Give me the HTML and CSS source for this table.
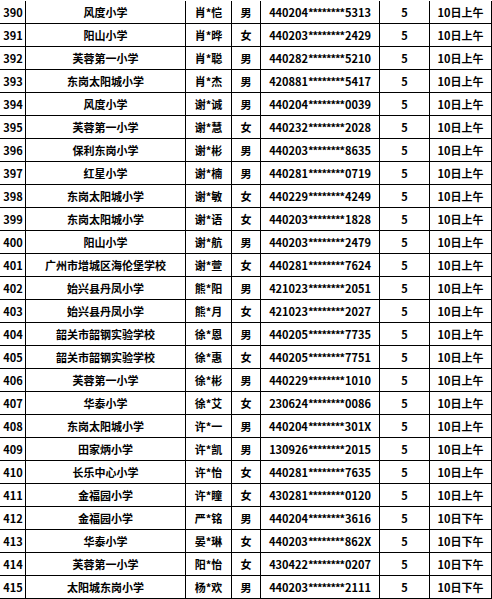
FILE: index.html
```html
<!DOCTYPE html>
<html lang="zh-CN">
<head>
<meta charset="utf-8">
<title>名单</title>
<link rel="stylesheet" href="styles.css">
</head>
<body>
<div class="sheet">
<div class="row"><div>390</div><div>风度小学</div><div>肖*恺</div><div>男</div><div>440204<span class="mask">********</span>5313</div><div>5</div><div>10日上午</div></div>
<div class="row"><div>391</div><div>阳山小学</div><div>肖*晔</div><div>女</div><div>440203<span class="mask">********</span>2429</div><div>5</div><div>10日上午</div></div>
<div class="row"><div>392</div><div>芙蓉第一小学</div><div>肖*聪</div><div>男</div><div>440282<span class="mask">********</span>5210</div><div>5</div><div>10日上午</div></div>
<div class="row"><div>393</div><div>东岗太阳城小学</div><div>肖*杰</div><div>男</div><div>420881<span class="mask">********</span>5417</div><div>5</div><div>10日上午</div></div>
<div class="row"><div>394</div><div>风度小学</div><div>谢*诚</div><div>男</div><div>440204<span class="mask">********</span>0039</div><div>5</div><div>10日上午</div></div>
<div class="row"><div>395</div><div>芙蓉第一小学</div><div>谢*慧</div><div>女</div><div>440232<span class="mask">********</span>2028</div><div>5</div><div>10日上午</div></div>
<div class="row"><div>396</div><div>保利东岗小学</div><div>谢*彬</div><div>男</div><div>440203<span class="mask">********</span>8635</div><div>5</div><div>10日上午</div></div>
<div class="row"><div>397</div><div>红星小学</div><div>谢*楠</div><div>男</div><div>440281<span class="mask">********</span>0719</div><div>5</div><div>10日上午</div></div>
<div class="row"><div>398</div><div>东岗太阳城小学</div><div>谢*敏</div><div>女</div><div>440229<span class="mask">********</span>4249</div><div>5</div><div>10日上午</div></div>
<div class="row"><div>399</div><div>东岗太阳城小学</div><div>谢*语</div><div>女</div><div>440203<span class="mask">********</span>1828</div><div>5</div><div>10日上午</div></div>
<div class="row"><div>400</div><div>阳山小学</div><div>谢*航</div><div>男</div><div>440203<span class="mask">********</span>2479</div><div>5</div><div>10日上午</div></div>
<div class="row"><div>401</div><div>广州市增城区海伦堡学校</div><div>谢*萱</div><div>女</div><div>440281<span class="mask">********</span>7624</div><div>5</div><div>10日上午</div></div>
<div class="row"><div>402</div><div>始兴县丹凤小学</div><div>熊*阳</div><div>男</div><div>421023<span class="mask">********</span>2051</div><div>5</div><div>10日上午</div></div>
<div class="row"><div>403</div><div>始兴县丹凤小学</div><div>熊*月</div><div>女</div><div>421023<span class="mask">********</span>2027</div><div>5</div><div>10日上午</div></div>
<div class="row"><div>404</div><div>韶关市韶钢实验学校</div><div>徐*恩</div><div>男</div><div>440205<span class="mask">********</span>7735</div><div>5</div><div>10日上午</div></div>
<div class="row"><div>405</div><div>韶关市韶钢实验学校</div><div>徐*惠</div><div>女</div><div>440205<span class="mask">********</span>7751</div><div>5</div><div>10日上午</div></div>
<div class="row"><div>406</div><div>芙蓉第一小学</div><div>徐*彬</div><div>男</div><div>440229<span class="mask">********</span>1010</div><div>5</div><div>10日上午</div></div>
<div class="row"><div>407</div><div>华泰小学</div><div>徐*艾</div><div>女</div><div>230624<span class="mask">********</span>0086</div><div>5</div><div>10日上午</div></div>
<div class="row"><div>408</div><div>东岗太阳城小学</div><div>许*一</div><div>男</div><div>440204<span class="mask">********</span>301X</div><div>5</div><div>10日上午</div></div>
<div class="row"><div>409</div><div>田家炳小学</div><div>许*凯</div><div>男</div><div>130926<span class="mask">********</span>2015</div><div>5</div><div>10日上午</div></div>
<div class="row"><div>410</div><div>长乐中心小学</div><div>许*怡</div><div>女</div><div>440281<span class="mask">********</span>7635</div><div>5</div><div>10日上午</div></div>
<div class="row"><div>411</div><div>金福园小学</div><div>许*瞳</div><div>女</div><div>430281<span class="mask">********</span>0120</div><div>5</div><div>10日上午</div></div>
<div class="row"><div>412</div><div>金福园小学</div><div>严*铭</div><div>男</div><div>440204<span class="mask">********</span>3616</div><div>5</div><div>10日下午</div></div>
<div class="row"><div>413</div><div>华泰小学</div><div>晏*琳</div><div>女</div><div>440203<span class="mask">********</span>862X</div><div>5</div><div>10日下午</div></div>
<div class="row"><div>414</div><div>芙蓉第一小学</div><div>阳*怡</div><div>女</div><div>430422<span class="mask">********</span>0207</div><div>5</div><div>10日下午</div></div>
<div class="row"><div>415</div><div>太阳城东岗小学</div><div>杨*欢</div><div>男</div><div>440203<span class="mask">********</span>2111</div><div>5</div><div>10日下午</div></div>
</div>
</body>
</html>
```
FILE: styles.css
```css
html, body {
  margin: 0;
  padding: 0;
  background: #ffffff;
}
body {
  padding-top: 1px;
  font-family: "Noto Sans CJK SC", "Microsoft YaHei", sans-serif;
  font-weight: 700;
  font-size: 11px;
  color: #000000;
}
.sheet {
  width: 492px;
}
.row {
  display: grid;
  grid-template-columns: 26px 160px 46px 29px 119px 50px 62px;
  height: 23px;
}
.row > div {
  box-sizing: border-box;
  border-right: 1px solid #000;
  border-bottom: 1px solid #000;
  display: flex;
  align-items: center;
  justify-content: center;
  white-space: nowrap;
  overflow: hidden;
  line-height: 1;
}
.row > div:first-child {
  padding-left: 1px;
}
.mask {
  letter-spacing: -1.1px;
  margin-right: 1px;
}
```
